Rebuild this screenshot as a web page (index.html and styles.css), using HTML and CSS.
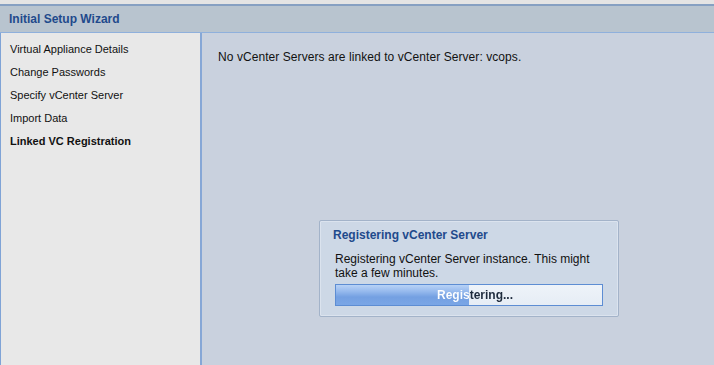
FILE: index.html
```html
<!DOCTYPE html>
<html>
<head>
<meta charset="utf-8">
<link rel="stylesheet" href="styles.css">
</head>
<body>
<div class="top-strip"></div>
<div class="header">Initial Setup Wizard</div>
<div class="wizard">
  <div class="sidebar">
    <div class="step">Virtual Appliance Details</div>
    <div class="step">Change Passwords</div>
    <div class="step">Specify vCenter Server</div>
    <div class="step">Import Data</div>
    <div class="step active">Linked VC Registration</div>
  </div>
  <div class="main">
    <p class="message">No vCenter Servers are linked to vCenter Server: vcops.</p>
    <div class="dialog">
      <div class="dialog-title">Registering vCenter Server</div>
      <div class="dialog-body">Registering vCenter Server instance. This might take a few minutes.</div>
      <div class="progress">
        <div class="progress-fill" style="width: 50%"></div>
        <div class="progress-label">Registering...</div>
      </div>
    </div>
  </div>
</div>
</body>
</html>
```
FILE: styles.css
```css
html, body {
  margin: 0;
  padding: 0;
  width: 714px;
  height: 365px;
  overflow: hidden;
  font-family: "Liberation Sans", Arial, sans-serif;
  background: #c9d1de;
}

.top-strip {
  height: 4px;
  background: #e4e4e4;
}

.header {
  height: 26px;
  border-top: 2px solid #86a0c2;
  border-bottom: 1px solid #8fb0dc;
  background: #b8c4cf;
  color: #1f4a8c;
  font-weight: bold;
  font-size: 12px;
  line-height: 26px;
  padding-left: 9px;
}

.wizard {
  display: flex;
  height: 332px;
}

.sidebar {
  width: 202px;
  box-sizing: border-box;
  background: #e8e8e8;
  border-left: 1px solid #7fa3d6;
  border-right: 2px solid #86a7d6;
  padding-top: 5px;
  padding-left: 9px;
}

.step {
  font-size: 11px;
  line-height: 23px;
  color: #111;
}

.step.active {
  font-weight: bold;
}

.main {
  flex: 1;
  position: relative;
  padding: 17px 16px;
}

.message {
  margin: 0;
  font-size: 12px;
  line-height: 15px;
  letter-spacing: 0.07px;
  color: #111;
}

.dialog {
  position: absolute;
  left: 117px;
  top: 187px;
  width: 270px;
  height: 95px;
  border: 1px solid #a3b3c9;
  border-radius: 2px;
  background: #cdd8e6;
  box-shadow: inset 0 0 0 1px #dbe3ee;
  padding: 0 15px 0 13px;
}

.dialog-title {
  margin-top: 7px;
  font-size: 12px;
  font-weight: bold;
  line-height: 15px;
  color: #1f4a8c;
}

.dialog-body {
  margin-top: 9px;
  padding-left: 2px;
  font-size: 12px;
  line-height: 14px;
  color: #111;
}

.progress {
  position: relative;
  margin-top: 4px;
  margin-left: 2px;
  width: 266px;
  height: 20px;
  border: 1px solid #5d8dd3;
  background: linear-gradient(#eef3f9, #e6edf5);
}

.progress-fill {
  position: absolute;
  left: 0;
  top: 0;
  bottom: 0;
  background: linear-gradient(#b8d2f6 0%, #98bbee 30%, #74a0e2 60%, #7aa6e6 100%);
}

.progress-label {
  position: relative;
  box-sizing: border-box;
  width: 266px;
  padding-left: 12px;
  text-align: center;
  font-size: 12px;
  font-weight: bold;
  line-height: 20px;
  color: transparent;
  background: linear-gradient(to right, #ffffff 133px, #1d2a3c 133px);
  -webkit-background-clip: text;
  background-clip: text;
}
```
